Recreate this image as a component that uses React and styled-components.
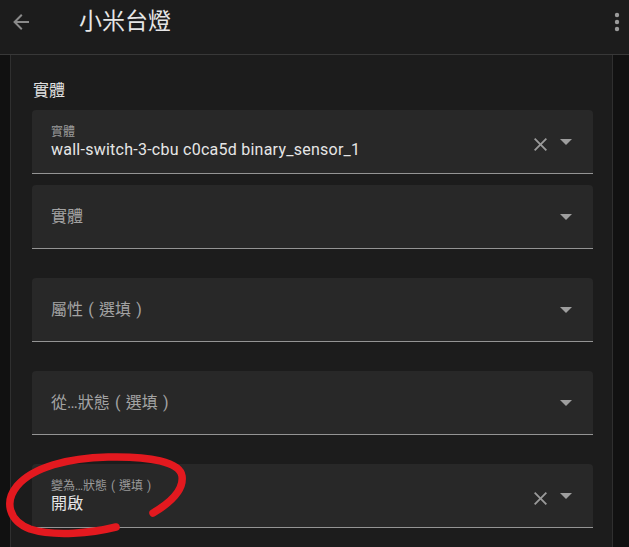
import React from 'react';
import styled, { createGlobalStyle } from 'styled-components';

const GlobalStyle = createGlobalStyle`
  html, body {
    margin: 0;
    padding: 0;
    background: #111111;
    overflow: hidden;
  }
  body {
    font-family: Roboto, 'Noto Sans CJK TC', sans-serif;
    -webkit-font-smoothing: antialiased;
  }
`;

const Page = styled.div`
  position: relative;
  width: 629px;
  height: 547px;
  overflow: hidden;
  background: #111111;
`;

const Header = styled.header`
  display: flex;
  align-items: flex-start;
  height: 54px;
  background: #1c1c1c;
  border-bottom: 1px solid #383838;
  padding: 0 9px 0 9px;
  box-sizing: content-box;
`;

const BackButton = styled.svg`
  width: 24px;
  height: 24px;
  margin-top: 10px;
  fill: #8a8a8a;
`;

const Title = styled.h1`
  margin: 4px 0 0 46px;
  font-family: 'Noto Sans CJK TC', sans-serif;
  font-size: 23px;
  font-weight: 400;
  line-height: 30px;
  color: #e6e6e6;
`;

const Kebab = styled.svg`
  width: 6px;
  height: 20px;
  margin: 12px 0 0 auto;
  fill: #9b9b9b;
`;

const Card = styled.section`
  width: 603px;
  height: 500px;
  margin-left: 10px;
  background: #1c1c1c;
  border-left: 1px solid #2f2f2f;
  border-right: 1px solid #2f2f2f;
  padding: 24px 19px 0 21px;
  box-sizing: border-box;
  display: flex;
  flex-direction: column;
  gap: 29px;
`;

const Heading = styled.h2`
  margin: 0 0 -18px 1px;
  font-family: 'Noto Sans CJK TC', sans-serif;
  font-size: 16px;
  font-weight: 400;
  line-height: 20px;
  color: #e1e1e1;
`;

const Group = styled.div`
  display: flex;
  flex-direction: column;
  gap: 11px;
`;

const Field = styled.div`
  display: flex;
  align-items: center;
  height: 64px;
  box-sizing: border-box;
  padding: 0 21px 0 19px;
  background: #282828;
  border-radius: 4px 4px 0 0;
  border-bottom: 1px solid #949494;
`;

const Text = styled.div`
  flex: 1;
  display: flex;
  flex-direction: column;
  min-width: 0;
`;

const Label = styled.span`
  font-size: ${(p) => (p.$floating ? '12px' : '16px')};
  line-height: ${(p) => (p.$floating ? '16px' : '22px')};
  color: ${(p) => (p.$floating ? '#9a9a9a' : '#a3a3a3')};
  white-space: nowrap;
`;

// fullwidth bracket drawn centred in its em box, as the TC locale does
const Paren = styled.span`
  display: inline-block;
  width: 1em;
  text-align: center;
  font-family: Roboto, sans-serif;
`;

const Value = styled.span`
  font-size: 16px;
  line-height: 20px;
  letter-spacing: 0.25px;
  color: #e6e6e6;
  white-space: nowrap;
`;

const Icons = styled.div`
  display: flex;
  align-items: center;
  gap: 13px;
`;

const ClearIcon = styled.svg`
  width: 13px;
  height: 13px;
  margin-top: 5px;
  fill: #9a9a9a;
`;

const DropIcon = styled.svg`
  width: 12px;
  height: 6px;
  fill: #9e9e9e;
`;

const Annotation = styled.svg`
  position: absolute;
  left: 0;
  top: 0;
  width: 629px;
  height: 547px;
  pointer-events: none;
`;

const fields = [
  { label: '實體', value: 'wall-switch-3-cbu c0ca5d binary_sensor_1' },
  { label: '實體' },
];

const options = [
  { label: '屬性（選填）' },
  { label: '從…狀態（選填）' },
  { label: '變為…狀態（選填）', value: '開啟' },
];

const formatLabel = (text) =>
  text.split(/([（）])/).map((part, i) => {
    if (part === '（') return <Paren key={i}>(</Paren>;
    if (part === '）') return <Paren key={i}>)</Paren>;
    return part;
  });

function SelectField({ label, value }) {
  return (
    <Field>
      <Text>
        <Label $floating={!!value}>{formatLabel(label)}</Label>
        {value && <Value>{value}</Value>}
      </Text>
      <Icons>
        {value && (
          <ClearIcon viewBox="5 5 14 14">
            <path d="M19,6.41L17.59,5L12,10.59L6.41,5L5,6.41L10.59,12L5,17.59L6.41,19L12,13.41L17.59,19L19,17.59L13.41,12L19,6.41Z" />
          </ClearIcon>
        )}
        <DropIcon viewBox="0 0 12 6">
          <path d="M0,0L6,6L12,0Z" />
        </DropIcon>
      </Icons>
    </Field>
  );
}

export default function App() {
  return (
    <Page lang="zh-Hant-TW">
      <GlobalStyle />
      <Header>
        <BackButton viewBox="0 0 24 24">
          <path d="M20,11V13H8L13.5,18.5L12.08,19.92L4.16,12L12.08,4.08L13.5,5.5L8,11H20Z" />
        </BackButton>
        <Title>小米台燈</Title>
        <Kebab viewBox="0 0 6 20">
          <circle cx="3" cy="3" r="2.2" />
          <circle cx="3" cy="10" r="2.2" />
          <circle cx="3" cy="17" r="2.2" />
        </Kebab>
      </Header>
      <Card>
        <Heading>實體</Heading>
        <Group>
          {fields.map((f, i) => (
            <SelectField key={i} {...f} />
          ))}
        </Group>
        {options.map((f, i) => (
          <SelectField key={i} {...f} />
        ))}
      </Card>
      <Annotation viewBox="0 0 629 547">
        <path
          d="M153,513 C170,503 184,490 182,476 C180,462 150,456 108,457 C68,458 33,467 17,486 C4,502 9,521 30,529 C55,537 92,533 116,527"
          fill="none"
          stroke="#e3191f"
          strokeWidth="7.5"
          strokeLinecap="round"
          strokeLinejoin="round"
        />
      </Annotation>
    </Page>
  );
}
